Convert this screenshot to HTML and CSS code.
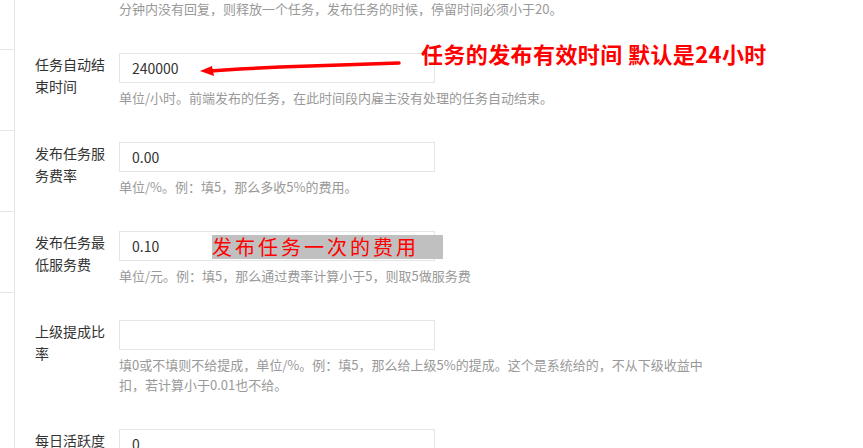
FILE: index.html
```html
<!DOCTYPE html>
<html lang="zh-CN">
<head>
    <meta charset="UTF-8">
    <meta name="viewport" content="width=device-width, initial-scale=1.0">
    <title>任务设置</title>
    <link rel="stylesheet" href="styles.css">
</head>
<body>

    <div id="sidebar">
        <div class="side-item first"></div>
        <div class="side-item"></div>
        <div class="side-item"></div>
        <div class="side-item"></div>
    </div>

    <div id="main">
        <div class="form-row top-row">
            <div class="form-label"></div>
            <div class="form-control">
                <p class="help">分钟内没有回复，则释放一个任务，发布任务的时候，停留时间必须小于20。</p>
            </div>
        </div>

        <div class="form-row">
            <label class="form-label">任务自动结束时间</label>
            <div class="form-control">
                <input type="text" value="240000">
                <p class="help">单位/小时。前端发布的任务，在此时间段内雇主没有处理的任务自动结束。</p>
            </div>
        </div>

        <div class="form-row">
            <label class="form-label">发布任务服务费率</label>
            <div class="form-control">
                <input type="text" value="0.00">
                <p class="help">单位/%。例：填5，那么多收5%的费用。</p>
            </div>
        </div>

        <div class="form-row">
            <label class="form-label">发布任务最低服务费</label>
            <div class="form-control">
                <input type="text" value="0.10">
                <p class="help">单位/元。例：填5，那么通过费率计算小于5，则取5做服务费</p>
            </div>
        </div>

        <div class="form-row">
            <label class="form-label">上级提成比率</label>
            <div class="form-control">
                <input type="text" value="">
                <p class="help">填0或不填则不给提成，单位/%。例：填5，那么给上级5%的提成。这个是系统给的，不从下级收益中扣，若计算小于0.01也不给。</p>
            </div>
        </div>

        <div class="form-row">
            <label class="form-label">每日活跃度</label>
            <div class="form-control">
                <input type="text" value="0">
            </div>
        </div>
    </div>

    <!-- 标注 -->
    <svg class="arrow" width="863" height="448" viewBox="0 0 863 448">
        <polyline points="399,63 340,65 280,67 240,69 210,71" fill="none" stroke="#ff0000" stroke-width="3.5" stroke-linecap="round"/>
        <polygon points="200,71 212,66 214,76" fill="#ff0000"/>
    </svg>
    <div class="note note-time">任务的发布有效时间 默认是24小时</div>
    <div class="note note-fee">发布任务一次的费用</div>

</body>
</html>
```

FILE: styles.css
```css
body {
    margin: 0;
    padding: 0;
    height: 448px;
    overflow: hidden;
    position: relative;
    display: flex;
    background-color: #fff;
    font-family: "Noto Sans CJK SC", "Microsoft YaHei", sans-serif;
    color: #333;
}
#sidebar {
    width: 14px;
    flex-shrink: 0;
    border-right: 1px solid #e6e6e6;
}
.side-item {
    height: 80px;
    border-bottom: 1px solid #e6e6e6;
}
.side-item.first {
    height: 49px;
}
#main {
    flex: 1;
    padding-left: 20px;
    margin-top: -1px;
}
.form-row {
    display: grid;
    grid-template-columns: 70px 1fr;
    column-gap: 14px;
    margin-bottom: 34px;
}
.form-label {
    font-size: 14px;
    line-height: 22px;
    color: #333;
}
.form-control input {
    display: block;
    box-sizing: border-box;
    width: 316px;
    height: 30px;
    margin: 0;
    padding: 0 12px;
    border: 1px solid #e5e5e5;
    font-family: inherit;
    font-size: 14px;
    color: #333;
    outline: none;
}
.help {
    margin: 5px 0 0 0;
    max-width: 594px;
    font-size: 13px;
    line-height: 20px;
    color: #999;
}
.top-row .help {
    margin-top: 0;
}
.arrow {
    position: absolute;
    top: 0;
    left: 0;
    pointer-events: none;
}
.note {
    position: absolute;
    color: #ff0000;
    white-space: nowrap;
}
.note-time {
    left: 421px;
    top: 39px;
    font-size: 22px;
    line-height: 28px;
    letter-spacing: 0.4px;
    font-weight: bold;
}
.note-fee {
    left: 212px;
    top: 235px;
    width: 231px;
    height: 24px;
    background-color: #c0c0c0;
    font-size: 20px;
    line-height: 24px;
    letter-spacing: 3px;
}
```
